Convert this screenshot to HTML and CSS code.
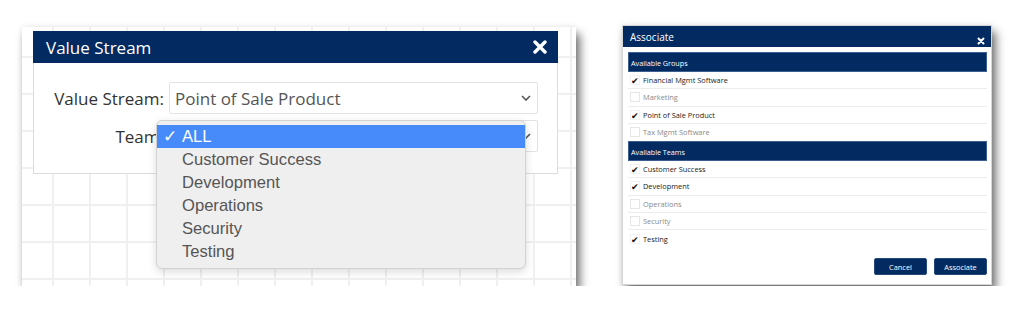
FILE: index.html
```html
<!DOCTYPE html>
<html lang="en">
<head>
  <meta charset="UTF-8">
  <title>Value Stream / Associate</title>
  <link rel="stylesheet" href="styles.css">
</head>
<body>
<div class="shot shot-left">
  <div class="vs-dialog">
    <div class="vs-head">
      <span>Value Stream</span>
      <svg class="x-big" width="14" height="14" viewBox="0 0 14 14"><path d="M2 2 L12 12 M12 2 L2 12" stroke="#fff" stroke-width="3.4" stroke-linecap="round"/></svg>
    </div>
    <div class="vs-body">
      <label class="vs-label">Value Stream:</label>
      <div class="vs-select">
        <span>Point of Sale Product</span>
        <svg class="chev" width="10" height="6" viewBox="0 0 10 6"><path d="M1 1 L5 5 L9 1" fill="none" stroke="#555" stroke-width="1.6"/></svg>
      </div>
      <label class="vs-label">Team:</label>
      <div class="vs-select team">
        <span></span>
        <svg class="chev" width="10" height="6" viewBox="0 0 10 6"><path d="M1 1 L5 5 L9 1" fill="none" stroke="#555" stroke-width="1.6"/></svg>
        <ul class="menu">
          <li class="picked"><span class="tick">✓</span>ALL</li>
          <li>Customer Success</li>
          <li>Development</li>
          <li>Operations</li>
          <li>Security</li>
          <li>Testing</li>
        </ul>
      </div>
    </div>
  </div>
</div>

<div class="shot shot-right">
  <div class="as-head">
    <span>Associate</span>
    <svg class="x-small" width="8" height="8" viewBox="0 0 8 8"><path d="M1.5 1.5 L6.5 6.5 M6.5 1.5 L1.5 6.5" stroke="#fff" stroke-width="2" stroke-linecap="round"/></svg>
  </div>
  <div class="as-body">
    <div class="section">Available Groups</div>
    <ul class="rows">
      <li class="on"><span class="box">✔</span>Financial Mgmt Software</li>
      <li><span class="box"></span>Marketing</li>
      <li class="on"><span class="box">✔</span>Point of Sale Product</li>
      <li><span class="box"></span>Tax Mgmt Software</li>
    </ul>
    <div class="section">Available Teams</div>
    <ul class="rows">
      <li class="on"><span class="box">✔</span>Customer Success</li>
      <li class="on"><span class="box">✔</span>Development</li>
      <li><span class="box"></span>Operations</li>
      <li><span class="box"></span>Security</li>
      <li class="on"><span class="box">✔</span>Testing</li>
    </ul>
    <div class="actions">
      <button>Cancel</button>
      <button>Associate</button>
    </div>
  </div>
</div>
</body>
</html>
```

FILE: styles.css
```css
body {
  margin: 0;
  background: #fff;
  display: flex;
  align-items: flex-start;
  font-family: "Open Sans", sans-serif;
}
.shot {
  box-sizing: border-box;
  box-shadow: 4px 7px 9px rgba(0,0,0,0.55), 0 0 6px rgba(0,0,0,0.08);
}
.shot-left {
  width: 554px;
  height: 259px;
  margin: 27px 0 0 22px;
  padding: 4px 0 0 11px;
  background-color: #fff;
  background-image:
    linear-gradient(to right, #f0f0f0 2px, transparent 2px),
    linear-gradient(to bottom, #f0f0f0 2px, transparent 2px);
  background-size: 37px 37px;
  background-position: 30px 29px;
}
.vs-dialog {
  width: 525px;
}
.vs-head {
  height: 32px;
  background: #032b62;
  color: #fff;
  font-size: 17px;
  padding: 0 11px 0 13px;
  display: flex;
  align-items: center;
  justify-content: space-between;
}
.vs-body {
  box-sizing: border-box;
  height: 111px;
  background: #fff;
  border: 1px solid #dcdcdc;
  border-top: none;
  padding: 19px 19px 0 0;
  display: grid;
  grid-template-columns: 130px 1fr;
  grid-auto-rows: 32px;
  column-gap: 5px;
  row-gap: 6px;
}
.vs-label {
  font-size: 17px;
  color: #333;
  text-align: right;
  align-self: center;
}
.vs-select {
  position: relative;
  box-sizing: border-box;
  border: 1px solid #e3e3e3;
  border-radius: 2px;
  padding: 0 6px 0 5px;
  font-size: 17px;
  color: #555;
  display: flex;
  align-items: center;
  justify-content: space-between;
}
.menu {
  position: absolute;
  left: -14px;
  top: -1px;
  width: 370px;
  box-sizing: border-box;
  margin: 0;
  padding: 4px 0 5px;
  list-style: none;
  background: #efefef;
  border: 1px solid #d2d2d2;
  border-radius: 6px;
  box-shadow: 0 3px 8px rgba(0,0,0,0.14);
  font-family: "Liberation Sans", Arial, sans-serif;
  font-size: 16.6px;
  color: #555;
}
.menu li {
  height: 23px;
  line-height: 23px;
  padding-left: 25px;
}
.menu li.picked {
  background: #468bf9;
  color: #fff;
  padding-left: 6px;
}
.tick {
  display: inline-block;
  width: 19px;
}
.shot-right {
  width: 370px;
  height: 260px;
  margin: 25px 0 0 46px;
  background: #fff;
  border: 1px solid #d6d6d6;
}
.as-head {
  height: 21px;
  background: #032b62;
  color: #fff;
  font-size: 10px;
  padding: 0 6px 0 7px;
  display: flex;
  align-items: center;
  justify-content: space-between;
}
.x-small {
  margin-top: 9px;
}
.as-body {
  padding: 5px 4px 0 5px;
}
.section {
  height: 20px;
  line-height: 20px;
  box-sizing: border-box;
  background: #032b62;
  border: 1px solid #3d5f8f;
  color: #fff;
  font-size: 7.2px;
  padding-left: 2px;
}
.rows {
  list-style: none;
  margin: 0;
  padding: 0;
}
.rows li {
  box-sizing: border-box;
  height: 17.25px;
  display: flex;
  align-items: center;
  font-size: 7.4px;
  color: #8a8a8a;
  border-bottom: 1px solid #ececec;
}
.rows li:last-child {
  border-bottom: none;
}
.rows li.on {
  color: #222;
}
.box {
  box-sizing: border-box;
  width: 10px;
  height: 10px;
  margin: 0 3px 0 2px;
  border: 1px solid #e6e6e6;
  font-size: 8.5px;
  line-height: 9px;
  text-align: center;
  color: #111;
}
.on .box {
  border-color: #f2f2f2;
}
.actions {
  display: flex;
  justify-content: flex-end;
  gap: 7px;
  margin-top: 11px;
}
.actions button {
  width: 53px;
  height: 17px;
  padding: 0;
  background: #032b62;
  color: #fff;
  border: 1px solid #27487a;
  border-radius: 2px;
  font-family: "Open Sans", sans-serif;
  font-size: 7.4px;
}
```
